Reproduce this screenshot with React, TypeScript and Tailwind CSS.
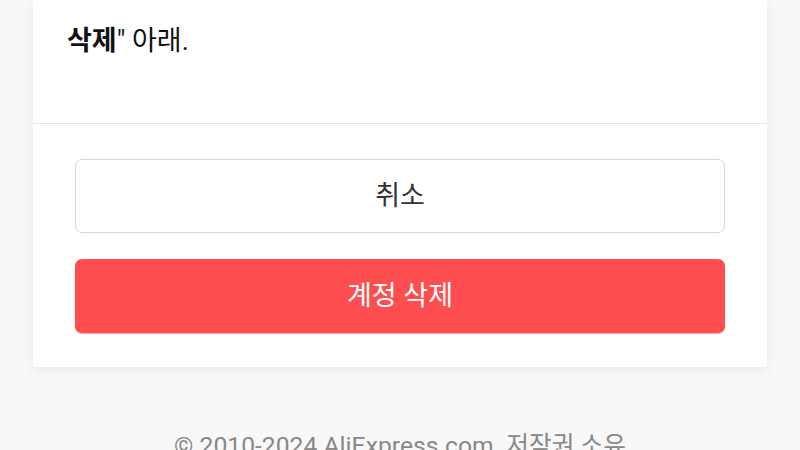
import React from 'react'

const font = { fontFamily: "Roboto, 'Noto Sans CJK KR', sans-serif" }

function DeleteAccountCard() {
    return (
        <section className="mx-[33px] bg-white shadow-[0_4px_10px_rgba(0,0,0,0.06)]">
            <div className="border-b border-b-[#e2e2e8] px-[34px] pb-[64px] pt-[23px]">
                <p className="text-[27px] leading-[36px] text-[#111]">
                    <b className="font-bold">삭제</b>" 아래.
                </p>
            </div>

            <div className="flex flex-col gap-[26px] px-[42px] pb-[34px] pt-[35px]">
                <button className="h-[74px] rounded-[7px] border border-[#d6d6d6] bg-white text-[27px] text-[#333]">
                    취소
                </button>
                <button className="h-[74px] rounded-[7px] bg-[#ff4e50] text-[27px] text-white shadow-[0_1px_1px_rgba(200,40,40,0.4)]">
                    계정 삭제
                </button>
            </div>
        </section>
    )
}

export default function App() {
    return (
        <main className="h-[450px] overflow-hidden bg-[#f8f8f8]" style={font}>
            <DeleteAccountCard />
            <footer className="mt-[61px] text-center text-[24.7px] leading-[36px] text-[#888]">
                © 2010-2024 AliExpress.com. 저작권 소유
            </footer>
        </main>
    )
}
